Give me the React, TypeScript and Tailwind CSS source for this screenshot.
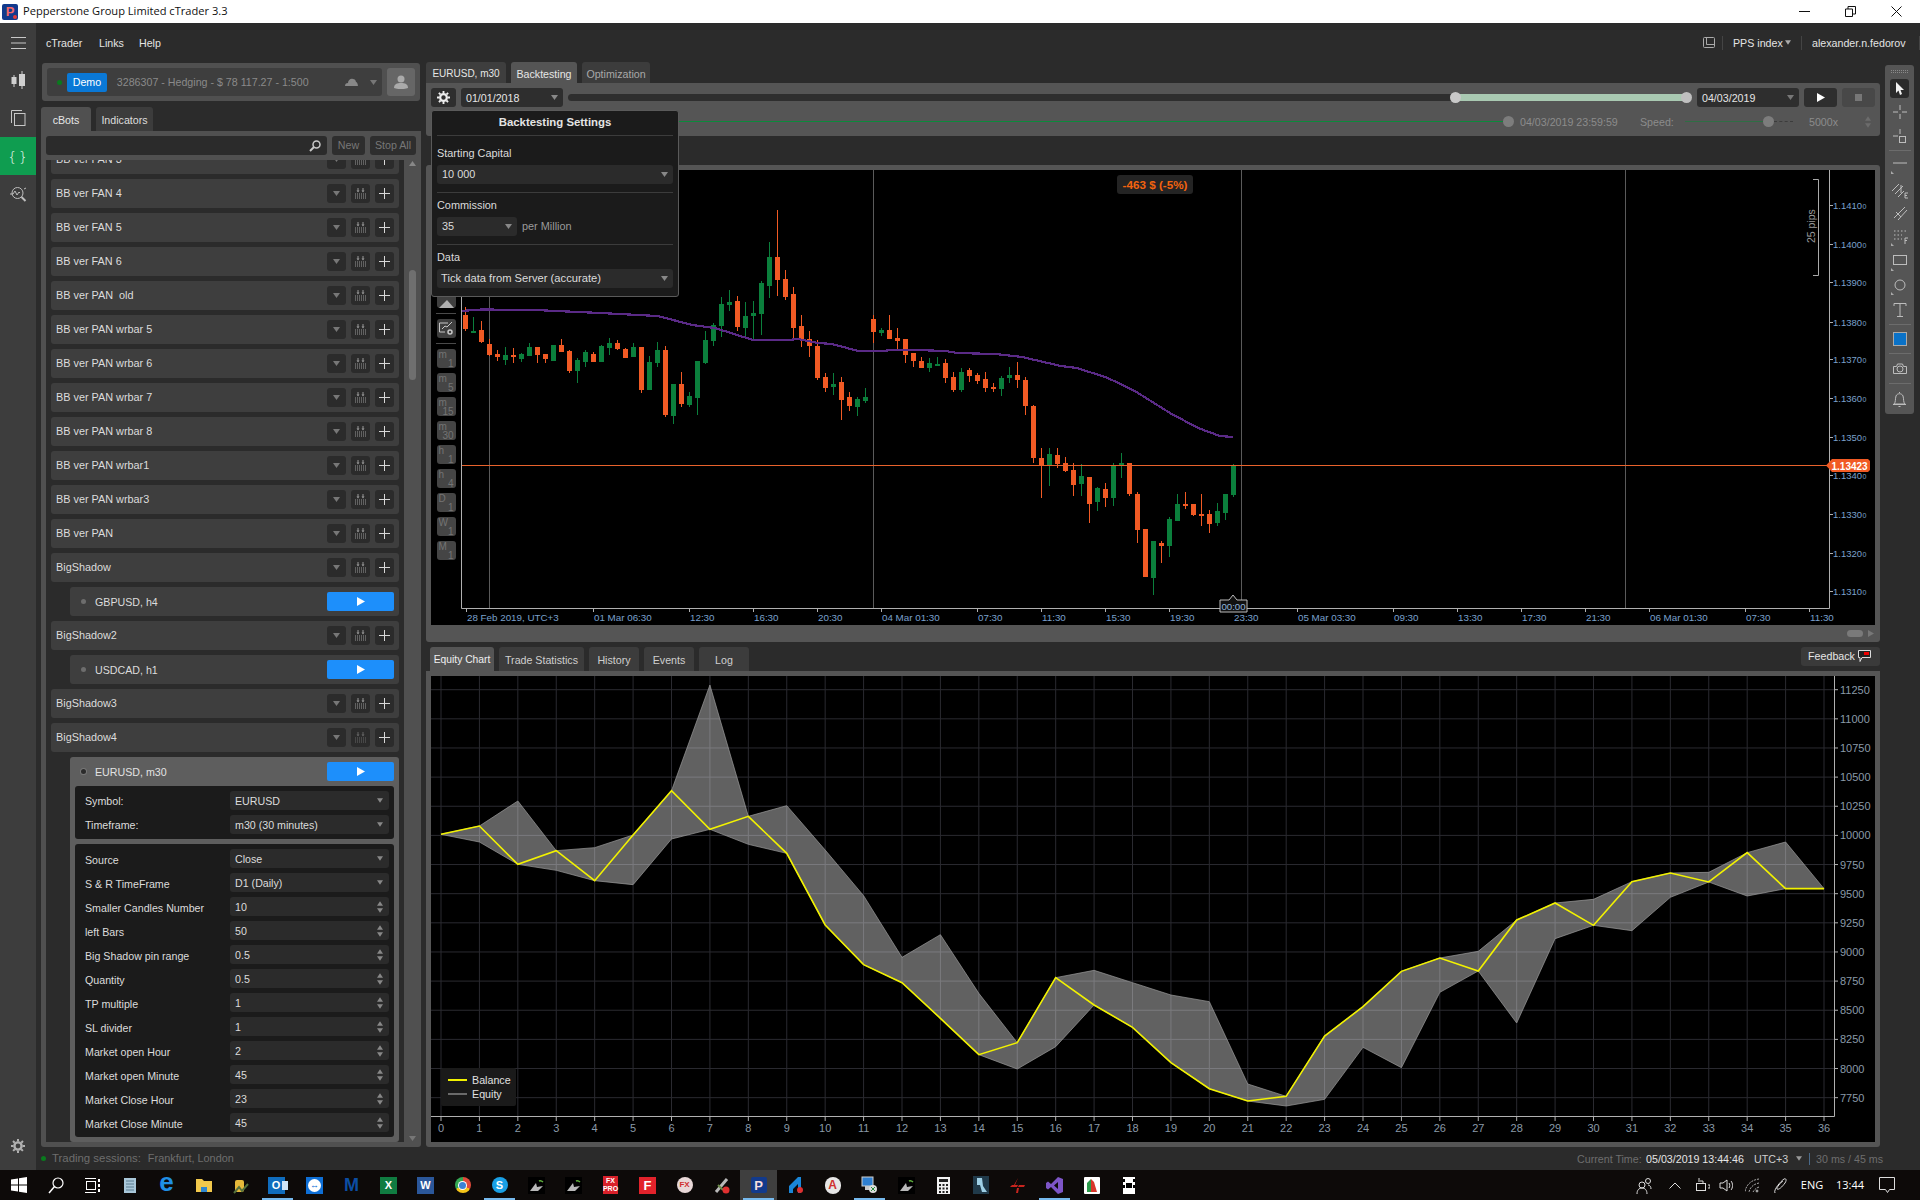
import React from "react";

const R = 1, G = 0;
const CANDLES: number[][] = [
[307,315,329,331,R],[317,331,332,333,G],[321,330,342,343,R],[339,344,355,356,R],[350,354,357,361,R],[347,355,360,365,G],[348,355,356,363,R],[353,354,359,362,G],
[343,347,356,356,G],[347,347,355,363,R],[354,354,359,363,R],[345,345,361,361,G],[339,345,352,352,R],[350,351,371,373,R],[358,360,371,383,G],[350,352,362,367,G],
[352,354,362,362,R],[345,346,362,362,G],[338,343,348,355,G],[340,343,349,350,R],[348,349,358,358,R],[343,347,357,357,G],[347,347,390,393,R],[356,362,390,390,G],
[342,350,363,367,G],[346,350,415,417,R],[384,384,416,424,G],[372,384,404,407,R],[392,396,405,407,G],[361,361,398,415,G],[331,340,363,364,G],[323,325,341,346,G],
[297,304,326,337,G],[290,302,305,311,G],[296,301,327,331,R],[302,316,328,337,G],[301,313,316,339,G],[281,283,314,335,G],[242,257,286,298,G],[210,257,280,296,R],
[270,279,297,300,R],[287,294,328,338,R],[315,326,339,347,R],[331,339,346,357,R],[340,346,378,380,R],[373,377,388,392,R],[373,384,387,395,G],[377,382,400,420,R],
[392,397,406,411,R],[397,399,407,416,G],[388,397,401,403,G],[315,319,332,343,R],[328,330,333,336,G],[315,330,339,339,R],[328,338,341,349,R],[339,339,355,363,R],
[353,353,361,367,R],[357,361,368,368,R],[358,363,368,372,G],[357,364,365,366,G],[359,363,378,383,R],[372,377,390,392,R],[368,372,390,392,G],[368,370,376,382,R],
[373,375,381,384,R],[372,379,388,392,R],[383,387,388,392,R],[376,378,389,396,G],[367,375,378,383,G],[362,375,380,388,R],[377,380,406,415,R],[405,406,458,463,R],
[448,458,465,498,R],[448,454,465,486,G],[448,455,464,468,R],[457,463,471,472,R],[463,470,485,496,R],[464,476,484,496,G],[477,477,504,523,R],[487,488,502,511,G],
[483,489,498,507,R],[463,465,498,506,G],[453,463,465,478,G],[463,463,494,496,R],[492,494,530,543,R],[529,529,577,577,R],[541,541,578,595,G],[541,543,546,563,R],
[517,519,546,557,G],[494,504,521,521,G],[492,504,505,509,R],[504,504,515,516,R],[494,514,515,526,R],[510,514,524,533,R],[503,511,523,526,G],[494,494,513,520,G],[464,465,495,497,G],
];
const MA = "461,311 482,309.5 535,310 600,313 658,316 692,325 715,328 753,340 788,340 798,339 818,343 832,344 858,351 882,351 892,350 915,350 946,351 957,353 995,354 1022,357 1061,366 1077,368 1105,377 1121,384 1138,393 1170,413 1198,428 1220,436 1233,437";
const PRICES: [string, number][] = [["1.1410",205],["1.1400",244],["1.1390",282],["1.1380",322],["1.1370",359],["1.1360",398],["1.1350",437],["1.1340",475],["1.1330",514],["1.1320",553],["1.1310",591]];
const TIMES: [string, number][] = [["28 Feb 2019, UTC+3",466],["01 Mar 06:30",593],["12:30",689],["16:30",753],["20:30",817],["04 Mar 01:30",881],["07:30",977],["11:30",1041],["15:30",1105],["19:30",1169],["23:30",1233],["05 Mar 03:30",1297],["09:30",1393],["13:30",1457],["17:30",1521],["21:30",1585],["06 Mar 01:30",1649],["07:30",1745],["11:30",1809]];

const BAL = [583,558,673,632,722,585,452,568,529,640,855,974,1028,1135,1244,1208,1013,1095,1162,1268,1346,1383,1369,1188,1100,994,954,993,840,789,856,725,699,726,638,746,746];
const UP = [583,558,483,632,623,585,452,135,529,497,630,767,952,884,1060,1208,1013,991,1028,1065,1085,1332,1369,1188,1100,994,954,934,840,789,778,725,699,697,638,606,746];
const LOW = [583,606,673,691,722,734,597,568,613,640,855,974,1028,1135,1244,1287,1220,1095,1162,1268,1346,1383,1398,1378,1222,1283,1057,993,1149,896,856,872,772,726,768,746,746];
const ex = (i: number) => 441 + 38.417 * i;
const ey = (p: number) => 640 + p / 3;
const EQV = [11250,11000,10750,10500,10250,10000,9750,9500,9250,9000,8750,8500,8250,8000,7750];
const evy = (v: number) => 689.7 + ((11250 - v) / 250) * 29.14;

function Tri({ c = "#888", w = 7, h = 5, up = false }: { c?: string; w?: number; h?: number; up?: boolean }) {
  return (
    <svg width={w} height={h} viewBox="0 0 7 5" className="shrink-0">
      <polygon points={up ? "0,5 7,5 3.5,0" : "0,0 7,0 3.5,5"} fill={c} />
    </svg>
  );
}
function Spin({ c = "#888" }: { c?: string }) {
  return (
    <div className="flex flex-col gap-[2px]">
      <Tri c={c} up w={6} h={5} />
      <Tri c={c} w={6} h={5} />
    </div>
  );
}
function PlusBtn() {
  return (
    <div className="w-[19px] h-[19px] rounded-[3px] bg-[#2b2b2b] flex items-center justify-center">
      <svg width="11" height="11"><path d="M5.5 0v11M0 5.5h11" stroke="#d8d8d8" strokeWidth="1" /></svg>
    </div>
  );
}
function GridBtn({ dim }: { dim?: boolean }) {
  const c = dim ? "#666" : "#999";
  return (
    <div className="w-[19px] h-[19px] rounded-[3px] bg-[#2b2b2b] flex items-center justify-center">
      <svg width="11" height="11" viewBox="0 0 11 11">
        <path d="M3 0v3M8 0v3" stroke={c} />
        <path d="M1.5 2.5h3L3 4.5zM6.5 2.5h3L8 4.5z" fill={c} />
        <path d="M0 6h11M0 8h11M0 10h11" stroke={c} strokeDasharray="1 1" />
      </svg>
    </div>
  );
}
function BotRow({ name, dim }: { name: string; dim?: boolean }) {
  return (
    <div className="h-[29px] w-[348px] shrink-0 bg-[#3e3e3e] rounded-[3px] flex items-center pl-[5px] pr-[5px] gap-[5px]">
      <span className="flex-1 text-[#dcdcdc] text-[10.85px] whitespace-pre">{name}</span>
      <div className="w-[19px] h-[19px] rounded-[3px] bg-[#2b2b2b] flex items-center justify-center"><Tri c="#777" /></div>
      <GridBtn dim={dim} />
      <PlusBtn />
    </div>
  );
}
function PlayBlue() {
  return (
    <div className="w-[67px] h-[19px] rounded-[2px] bg-[#1d8ffb] flex items-center justify-center">
      <svg width="8" height="9"><polygon points="0,0 8,4.5 0,9" fill="#fff" /></svg>
    </div>
  );
}
function SubRow({ name }: { name: string }) {
  return (
    <div className="h-[29px] w-[329px] ml-[19px] shrink-0 bg-[#3e3e3e] rounded-[3px] flex items-center pl-[11px] pr-[5px]">
      <div className="w-[5px] h-[5px] rounded-full bg-[#6d6d6d] mr-[9px]" />
      <span className="flex-1 text-[#dcdcdc]">{name}</span>
      <PlayBlue />
    </div>
  );
}
function Field({ label, value, kind, low }: { label: string; value: string; kind: "s" | "n"; low?: boolean }) {
  return (
    <div className="flex items-center h-[19px]">
      <span className={low ? "w-[145px] text-[#dcdcdc] whitespace-pre pt-[2px]" : "w-[145px] text-[#dcdcdc] whitespace-pre"}>{label}</span>
      <div className="w-[159px] h-[19px] bg-[#2b2b2b] rounded-[3px] flex items-center pl-[5px] pr-[6px] justify-between">
        <span className="text-[#dcdcdc]">{value}</span>
        {kind === "s" ? <Tri c="#888" w={6} h={5} /> : <Spin />}
      </div>
    </div>
  );
}

function Title() {
  return (
    <div className="h-[23px] bg-white flex items-center shrink-0 relative">
      <div className="ml-[2px] w-[16px] h-[16px] rounded-[2px] bg-[#123a8c] flex items-center justify-center relative">
        <span className="text-[#f26a6a] text-[13px] font-bold leading-none">P</span>
        <div className="absolute right-[1px] bottom-[1px] w-[4px] h-[4px] rounded-full bg-[#e23b3b]" />
      </div>
      <span className="ml-[5px] text-[#111] text-[11.1px] font-['Open_Sans',sans-serif]">Pepperstone Group Limited cTrader 3.3</span>
      <div className="ml-auto flex items-center">
        <div className="w-[46px] flex justify-center"><svg width="11" height="11"><path d="M0 5.5h11" stroke="#111" /></svg></div>
        <div className="w-[46px] flex justify-center"><svg width="11" height="11"><path d="M.5 3h7v7.5h-7zM3 3V.5h7.5V8H8" fill="none" stroke="#111" /></svg></div>
        <div className="w-[46px] mr-[1px] flex justify-center"><svg width="11" height="11"><path d="M.5.5l10 10M10.5.5l-10 10" stroke="#111" /></svg></div>
      </div>
    </div>
  );
}

function Sidebar() {
  return (
    <div className="w-[36px] shrink-0 bg-[#3d3d3d] flex flex-col items-center">
      <div className="h-[38px] w-full flex items-center justify-center pt-[2px]">
        <svg width="15" height="12"><path d="M0 .5h15M0 6h15M0 11.5h15" stroke="#c8c8c8" /></svg>
      </div>
      <div className="h-[38px] w-full flex items-center justify-center">
        <svg width="15" height="18" viewBox="0 0 15 18"><path d="M3 4v12M11 0v18" stroke="#d0d0d0" /><rect x="0.5" y="6" width="5" height="7" fill="#d0d0d0" /><rect x="8" y="3" width="6" height="12" fill="#d0d0d0" /></svg>
      </div>
      <div className="h-[38px] w-full flex items-center justify-center">
        <svg width="15" height="16" viewBox="0 0 15 16" fill="none" stroke="#c8c8c8"><path d="M.5 13V.5H11" /><rect x="3.5" y="3.5" width="10.5" height="12" /></svg>
      </div>
      <div className="h-[38px] w-full bg-[#0f9d50] flex items-center justify-center">
        <span className="text-[#e8f7ee] text-[14px] tracking-[1px] font-['Open_Sans',sans-serif] font-light">{"{ }"}</span>
      </div>
      <div className="h-[38px] w-full flex items-center justify-center">
        <svg width="17" height="16" viewBox="0 0 17 16" fill="none" stroke="#bdbdbd"><circle cx="7.5" cy="7" r="5.5" /><path d="M11.5 11l4 4" strokeWidth="2" /><path d="M0 8h3l2-3 2 4 2-3 1 1M14 3l2-1" /></svg>
      </div>
      <div className="mt-auto h-[40px] w-full flex items-start justify-center pt-[9px]">
        <svg width="14" height="14" viewBox="0 0 14 14"><circle cx="7" cy="7" r="3.6" fill="none" stroke="#b0b0b0" strokeWidth="2.4" /><path d="M7 0v14M0 7h14M2 2l10 10M12 2L2 12" stroke="#b0b0b0" strokeWidth="2" strokeDasharray="2.4 9.2 2.4" /></svg>
      </div>
    </div>
  );
}

function Account() {
  return (
    <div className="ml-[1px] w-[378px] h-[38px] bg-[#505050] rounded-[3px] mt-[1px] flex items-center pl-[5px] pr-[5px] gap-[5px] shrink-0">
      <div className="w-[335px] h-[28px] bg-[#3e3e3e] rounded-[3px] flex items-center pl-[10px] pr-[5px]">
        <div className="w-[5px] h-[5px] rounded-full bg-[#0a7a1e]" />
        <div className="ml-[5px] w-[40px] h-[19px] bg-[#0a78d6] rounded-[2px] flex items-center justify-center text-white">Demo</div>
        <span className="ml-[10px] text-[#8a8a8a] w-[229px] whitespace-nowrap">3286307 - Hedging - $ 78 117.27 - 1:500</span>
        <svg width="13" height="8" viewBox="0 0 13 8"><path d="M0 8c0-2 1-3 3-3 0-3 3-5 5-4 2 0 3 2 3 3 1 0 2 2 2 4z" fill="#888" /></svg>
        <div className="ml-[12px]"><Tri c="#777" /></div>
      </div>
      <div className="w-[28px] h-[28px] bg-[#666] rounded-[3px] flex items-center justify-center">
        <svg width="14" height="14" viewBox="0 0 14 14"><circle cx="7" cy="4" r="3.5" fill="#aaa" /><path d="M0 13c0-4 3-5 7-5s7 1 7 5c-3 1.5-11 1.5-14 0z" fill="#aaa" /></svg>
      </div>
    </div>
  );
}

function Card() {
  const r1: [string, string][] = [["Symbol:", "EURUSD"], ["Timeframe:", "m30 (30 minutes)"]];
  const r2: [string, string, "s" | "n"][] = [
    ["Source", "Close", "s"], ["S & R TimeFrame", "D1 (Daily)", "s"], ["Smaller Candles Number", "10", "n"], ["left Bars", "50", "n"],
    ["Big Shadow pin range", "0.5", "n"], ["Quantity", "0.5", "n"], ["TP multiple", "1", "n"], ["SL divider", "1", "n"],
    ["Market open Hour", "2", "n"], ["Market open Minute", "45", "n"], ["Market Close Hour", "23", "n"], ["Market Close Minute", "45", "n"],
  ];
  return (
    <div className="ml-[19px] w-[329px] bg-[#5e5e5e] rounded-[3px] px-[5px] pb-[5px] shrink-0">
      <div className="h-[29px] flex items-center pl-[6px]">
        <div className="w-[5px] h-[5px] rounded-full bg-[#2b2b2b] ring-1 ring-[#777] mr-[9px]" />
        <span className="flex-1 text-[#e2e2e2]">EURUSD, m30</span>
        <PlayBlue />
      </div>
      <div className="bg-[#1b1b1b] rounded-[3px] pl-[10px] py-[5px] flex flex-col gap-[5px] h-[53px]">
        {r1.map(([a, b]) => <Field key={a} label={a} value={b} kind="s" />)}
      </div>
      <div className="mt-[5px] bg-[#1b1b1b] rounded-[3px] pl-[10px] py-[5px] flex flex-col gap-[5px] h-[293px]">
        {r2.map(([a, b, k]) => <Field key={a} label={a} value={b} kind={k} low />)}
      </div>
    </div>
  );
}

function LeftCol() {
  const rows = ["BB ver FAN 3", "BB ver FAN 4", "BB ver FAN 5", "BB ver FAN 6", "BB ver PAN  old", "BB ver PAN wrbar 5", "BB ver PAN wrbar 6", "BB ver PAN wrbar 7", "BB ver PAN wrbar 8", "BB ver PAN wrbar1", "BB ver PAN wrbar3", "BB ver PAN", "BigShadow"];
  return (
    <div className="w-[380px] shrink-0 flex flex-col">
      <Account />
      <div className="flex gap-[5px] mt-[6px] h-[24px] shrink-0">
        <div className="w-[50px] bg-[#505050] rounded-t-[3px] flex items-center justify-center text-[#e6e6e6] pt-[2px]">cBots</div>
        <div className="w-[57px] bg-[#3c3c3c] rounded-t-[3px] flex items-center justify-center text-[#dcdcdc] pt-[2px]">Indicators</div>
      </div>
      <div className="w-[380px] h-[1016px] bg-[#505050] rounded-b-[3px] p-[5px] flex flex-col gap-[5px]">
        <div className="flex gap-[5px] h-[19px] shrink-0">
          <div className="w-[281px] bg-[#2b2b2b] rounded-[3px] flex items-center justify-end pr-[6px]">
            <svg width="12" height="12" viewBox="0 0 12 12" fill="none" stroke="#c8c8c8"><circle cx="7.5" cy="4.5" r="3.5" strokeWidth="1.5" /><path d="M5 7l-4 4" strokeWidth="2" /></svg>
          </div>
          <div className="w-[33px] bg-[#2e2e2e] rounded-[3px] flex items-center justify-center text-[#777] pb-[1px]">New</div>
          <div className="w-[46px] bg-[#2e2e2e] rounded-[3px] flex items-center justify-center text-[#777] pb-[1px]">Stop All</div>
        </div>
        <div className="flex h-[982px] shrink-0">
          <div className="w-[358px] h-[982px] bg-[#2b2b2b] overflow-hidden pl-[5px]">
            <div className="-mt-[15px] flex flex-col gap-[5px]">
              {rows.map((r) => <BotRow key={r} name={r} />)}
              <SubRow name="GBPUSD, h4" />
              <BotRow name="BigShadow2" />
              <SubRow name="USDCAD, h1" />
              <BotRow name="BigShadow3" />
              <BotRow name="BigShadow4" dim />
              <Card />
            </div>
          </div>
          <div className="w-[12px] h-[982px] flex flex-col items-end justify-between py-[1px]">
            <div className="flex flex-col items-end"><Tri c="#888" up /><div className="w-[7px] h-[110px] mt-[104px] rounded-full bg-[#6f6f6f]" /></div>
            <Tri c="#777" />
          </div>
        </div>
      </div>
    </div>
  );
}

function PriceChart() {
  return (
    <svg width="1444" height="455" viewBox="431 170 1444 455" className="block bg-black" fontFamily="'Liberation Sans',sans-serif">
      <path d="M489.5 170V608M873.5 170V608M1241.5 170V608M1625.5 170V608" stroke="#5a5a5a" />
      {CANDLES.map((c, i) => {
        const x = 465 + 8 * i;
        const col = c[4] === R ? "#f15a24" : "#0b7f3c";
        return (
          <g key={i} fill={col}>
            <rect x={x} y={c[0]} width="1" height={c[3] - c[0]} />
            <rect x={x - 2} y={c[1]} width="5" height={Math.max(c[2] - c[1], 2)} />
          </g>
        );
      })}
      <polyline points={MA} fill="none" stroke="#5a2a86" strokeWidth="2.2" shapeRendering="crispEdges" />
      <path d="M461 465.5H1829" stroke="#e8622c" />
      <path d="M461.5 170V608.5H1829.5V170" fill="none" stroke="#b0b0b0" />
      {PRICES.map(([t, y]) => (
        <g key={t}>
          <path d={`M1829 ${y + 0.5}h4`} stroke="#b0b0b0" />
          <text x="1833" y={y + 3.5} fontSize="9.5" fill="#7aa0cc">{t}<tspan fontSize="7" dx="0.5">0</tspan></text>
        </g>
      ))}
      {TIMES.map(([t, x], i) => (
        <g key={i}>
          <path d={`M${x + 0.5} 608v4`} stroke="#b0b0b0" />
          <text x={x + 1} y="621" fontSize="9.8" fill="#7aa0cc">{t}</text>
        </g>
      ))}
      <path d="M1813 179.5h5.5V275.5H1813" fill="none" stroke="#aaa" />
      <text x="0" y="0" fontSize="10.5" fill="#999" transform="translate(1815 243) rotate(-90)">25 pips</text>
      <rect x="1117" y="175" width="76" height="19" rx="3" fill="#242424" />
      <text x="1155" y="188.5" textAnchor="middle" fontSize="11.7" fill="#f2630f" fontWeight="700">-463 $ (-5%)</text>
      <path d="M1229 600l4-5 4 5h10v12h-27v-12z" fill="#111" stroke="#bbb" />
      <text x="1233.5" y="610" textAnchor="middle" fontSize="9.7" fill="#8fb3da">00:00</text>
      <path d="M1826 465.5l6-6.500h36l2 2v9l-2 2h-36z" fill="#f15a24" />
      <text x="1831.5" y="469.5" fontSize="10" fill="#fff" fontWeight="700">1.13423</text>
    </svg>
  );
}

function TfBtn({ a, b }: { a: string; b: string }) {
  return (
    <div className="w-[19px] h-[19px] rounded-[3px] bg-[#454545] flex flex-col justify-between px-[2px] text-[#747474] text-[10px] leading-[9px] py-[1px]">
      <span className="self-start">{a}</span>
      <span className="self-end">{b}</span>
    </div>
  );
}
function ChartTools() {
  const tf: [string, string][] = [["m", "1"], ["m", "5"], ["m", "15"], ["m", "30"], ["h", "1"], ["h", "4"], ["D", "1"], ["W", "1"], ["M", "1"]];
  return (
    <div className="absolute left-[10px] top-[124px] w-[20px] flex flex-col items-center gap-[5px]">
      <div className="w-[19px] h-[19px] rounded-[3px] bg-[#3f3f3f] flex items-end justify-center">
        <svg width="15" height="8"><polygon points="0,8 8,0 15,8" fill="#b0b0b0" /></svg>
      </div>
      <div className="w-[20px] h-[1px] bg-[#4a4a4a]" />
      <div className="w-[19px] h-[19px] rounded-[3px] bg-[#3f3f3f] flex items-center justify-center">
        <svg width="15" height="15" viewBox="0 0 15 15" fill="none" stroke="#c8c8c8"><path d="M9 2H.5v9H6M3 8l3-3 2 1 5-5" /><circle cx="11" cy="11" r="2" strokeWidth="1.5" /></svg>
      </div>
      <div className="w-[20px] h-[1px] bg-[#4a4a4a]" />
      {tf.map(([a, b]) => <TfBtn key={a + b} a={a} b={b} />)}
    </div>
  );
}

function Popup() {
  return (
    <div className="absolute left-[5px] top-[48px] w-[248px] h-[187px] bg-[#1b1b1b] border border-[#5a5a5a] rounded-[3px] px-[5px] flex flex-col text-[#dcdcdc] text-[10.9px] z-10">
      <div className="h-[25px] flex items-center justify-center border-b border-[#3c3c3c] font-bold text-[#e4e4e4] text-[11.4px] shrink-0">Backtesting Settings</div>
      <div className="h-[57px] border-b border-[#3c3c3c] flex flex-col justify-start pt-[11px] shrink-0">
        <span className="leading-[12px]">Starting Capital</span>
        <div className="mt-[6px] h-[19px] bg-[#2b2b2b] rounded-[3px] flex items-center justify-between px-[5px]"><span>10 000</span><Tri /></div>
      </div>
      <div className="h-[52px] border-b border-[#3c3c3c] flex flex-col pt-[6px] shrink-0">
        <span className="leading-[12px]">Commission</span>
        <div className="mt-[6px] flex items-center gap-[5px]">
          <div className="w-[80px] h-[19px] bg-[#2b2b2b] rounded-[3px] flex items-center justify-between px-[5px]"><span>35</span><Tri /></div>
          <span className="text-[#9a9a9a]">per Million</span>
        </div>
      </div>
      <div className="flex flex-col pt-[6px]">
        <span className="leading-[12px]">Data</span>
        <div className="mt-[6px] h-[19px] bg-[#2b2b2b] rounded-[3px] flex items-center justify-between pl-[4px] pr-[5px]"><span className="text-[11.2px]">Tick data from Server (accurate)</span><Tri /></div>
      </div>
    </div>
  );
}

function Toolbar() {
  return (
    <div className="h-[53px] bg-[#555] rounded-b-[3px] rounded-tr-[3px] shrink-0 p-[5px] flex flex-col gap-[5px]">
      <div className="flex gap-[5px] h-[19px] items-center">
        <div className="w-[25px] h-[19px] bg-[#2e2e2e] rounded-[3px] flex items-center justify-center">
          <svg width="13" height="13" viewBox="0 0 14 14"><circle cx="7" cy="7" r="3.6" fill="none" stroke="#eee" strokeWidth="2.4" /><path d="M7 0v14M0 7h14M2 2l10 10M12 2L2 12" stroke="#eee" strokeWidth="2" strokeDasharray="2.4 9.2 2.4" /></svg>
        </div>
        <div className="w-[102px] h-[19px] bg-[#2e2e2e] rounded-[3px] flex items-center justify-between px-[5px] text-[#e6e6e6]"><span>01/01/2018</span><Tri c="#888" /></div>
        <div className="flex-1 relative h-[7px] flex">
          <div className="w-[887px] h-[7px] bg-[#2e2e2e] rounded-l-full" />
          <div className="w-[231px] h-[7px] bg-[#a9c9b2]" />
          <div className="absolute left-[882px] -top-[2px] w-[11px] h-[11px] rounded-full bg-[#c9c9c9]" />
          <div className="absolute left-[1113px] -top-[2px] w-[11px] h-[11px] rounded-full bg-[#c0c0c0]" />
        </div>
        <div className="w-[102px] h-[19px] bg-[#2e2e2e] rounded-[3px] flex items-center justify-between px-[5px] text-[#e6e6e6]"><span>04/03/2019</span><Tri c="#777" /></div>
        <div className="w-[33px] h-[19px] bg-[#2e2e2e] rounded-[3px] flex items-center justify-center"><svg width="8" height="9"><polygon points="0,0 8,4.5 0,9" fill="#fff" /></svg></div>
        <div className="w-[33px] h-[19px] bg-[#484848] rounded-[3px] flex items-center justify-center"><div className="w-[7px] h-[7px] bg-[#777]" /></div>
      </div>
      <div className="flex items-center h-[19px]">
        <div className="ml-[37px] w-[1035px] h-[1px] bg-[#0b8a3c]" />
        <div className="w-[11px] h-[11px] rounded-full bg-[#7d7d7d]" />
        <span className="ml-[6px] w-[100px] text-[#8c8c8c] whitespace-nowrap">04/03/2019 23:59:59</span>
        <span className="ml-[20px] w-[33px] text-[#8c8c8c]">Speed:</span>
        <div className="ml-[12px] w-[78px] h-[1px] bg-[#2e6e44]" />
        <div className="w-[11px] h-[11px] rounded-full bg-[#7d7d7d]" />
        <div className="w-[19px] border-t border-dashed border-[#3c3c3c]" />
        <span className="ml-[16px] w-[30px] text-[#8c8c8c]">5000x</span>
        <div className="ml-[26px]"><Spin c="#6c6c6c" /></div>
      </div>
    </div>
  );
}

function ChartPanel() {
  return (
    <div className="mt-[29px] h-[477px] bg-[#555] rounded-[3px] shrink-0 px-[5px] pt-[5px] flex flex-col relative">
      <PriceChart />
      <ChartTools />
      <div className="h-[17px] flex items-center justify-end pr-[1px]">
        <div className="flex items-center gap-[5px]">
          <div className="w-[16px] h-[7px] rounded-full bg-[#7a7a7a]" />
          <svg width="6" height="7"><polygon points="0,0 6,3.5 0,7" fill="#777" /></svg>
        </div>
      </div>
    </div>
  );
}

function EquityChart() {
  const up = UP.map((p, i) => `${ex(i)},${ey(p)}`).join(" ");
  const low = LOW.map((p, i) => `${ex(i)},${ey(p)}`).reverse().join(" ");
  const bal = BAL.map((p, i) => `${ex(i)},${ey(p)}`).join(" ");
  return (
    <svg width="1444" height="466" viewBox="431 676 1444 466" className="block bg-black" fontFamily="'Liberation Sans',sans-serif">
      {EQV.map((v) => <path key={v} d={`M431 ${evy(v)}H1834`} stroke="#2a2a30" />)}
      {BAL.map((_, i) => <path key={i} d={`M${ex(i)} 676V1117`} stroke="#2a2a30" />)}
      <polygon points={`${up} ${low}`} fill="#ffffff" fillOpacity="0.38" stroke="#9a9a9a" strokeOpacity="0.7" />
      <polyline points={bal} fill="none" stroke="#f2f200" strokeWidth="1.6" />
      <path d="M431 1116.5H1834.5V676" fill="none" stroke="#b0b0b0" />
      {EQV.map((v) => (
        <g key={v}>
          <path d={`M1834 ${evy(v)}h4`} stroke="#b0b0b0" />
          <text x="1840" y={evy(v) + 4} fontSize="11" fill="#8a9aa8">{v}</text>
        </g>
      ))}
      {BAL.map((_, i) => (
        <g key={i}>
          <path d={`M${ex(i)} 1117v4`} stroke="#b0b0b0" />
          <text x={ex(i)} y="1132" fontSize="11" textAnchor="middle" fill="#8a9aa8">{i}</text>
        </g>
      ))}
      <rect x="441" y="1068" width="75" height="38" rx="2" fill="#1a1a1a" />
      <path d="M448 1080h19" stroke="#f2f200" strokeWidth="2" />
      <path d="M448 1094h19" stroke="#6a6a6a" strokeWidth="2" />
      <text x="472" y="1084" fontSize="10.7" fill="#e0e0e0">Balance</text>
      <text x="472" y="1098" fontSize="10.7" fill="#e0e0e0">Equity</text>
    </svg>
  );
}

function BottomPanel() {
  const tabs: [string, string][] = [["Trade Statistics", "w-[85px]"], ["History", "w-[50px]"], ["Events", "w-[50px]"], ["Log", "w-[50px]"]];
  return (
    <div className="flex flex-col shrink-0">
      <div className="mt-[5px] h-[24px] flex pl-[4px] gap-[5px] shrink-0">
        <div className="w-[64px] bg-[#555] rounded-t-[3px] flex items-center justify-center text-[#f0f0f0] text-[10.3px] pt-[2px] whitespace-nowrap">Equity Chart</div>
        {tabs.map(([t, w]) => <div key={t} className={`${w} bg-[#3c3c3c] rounded-t-[3px] flex items-center justify-center text-[#cfcfcf] pt-[2px]`}>{t}</div>)}
        <div className="ml-auto w-[79px] h-[19px] bg-[#3a3a3a] rounded-[3px] flex items-center justify-center gap-[3px] pr-[2px] pb-[1px] text-[#e6e6e6]">
          <span>Feedback</span>
          <svg width="13" height="13" viewBox="0 0 13 13"><path d="M.5 .5h12v7H4l-2 4v-4H.5z" fill="#222" stroke="#ddd" /><rect x="6" y="2" width="5" height="3" fill="#e00" /></svg>
        </div>
      </div>
      <div className="h-[476px] bg-[#555] rounded-b-[3px] p-[5px] shrink-0">
        <EquityChart />
      </div>
    </div>
  );
}

function MainCol() {
  return (
    <div className="w-[1454px] shrink-0 flex flex-col relative">
      <div className="flex gap-[5px] h-[21px] shrink-0">
        <div className="w-[80px] bg-[#3e3e3e] rounded-t-[3px] flex items-center justify-center text-[#e6e6e6] text-[10px] pt-[2px] whitespace-nowrap">EURUSD, m30</div>
        <div className="w-[66px] bg-[#555] rounded-t-[3px] flex items-center justify-center text-[#e6e6e6] pt-[2px]">Backtesting</div>
        <div className="w-[68px] bg-[#3c3c3c] rounded-t-[3px] flex items-center justify-center text-[#a8a8a8] pt-[2px]">Optimization</div>
      </div>
      <Toolbar />
      <ChartPanel />
      <BottomPanel />
      <Popup />
    </div>
  );
}

function Sep() {
  return <div className="h-[5px] w-full flex items-center justify-center shrink-0"><div className="w-[22px] h-[1px] bg-[#6c6c6c]" /></div>;
}
function CornerMark() {
  return <path d="M1 19v-3l3 3z" fill="#aaa" stroke="none" />;
}
function RightTools() {
  const s = { fill: "none", stroke: "#bdbdbd" };
  return (
    <div className="w-[29px] h-[349px] ml-[5px] mt-[3px] bg-[#555] rounded-[3px] flex flex-col items-center shrink-0">
      <div className="h-[12px] flex items-center"><svg width="18" height="3"><path d="M0 .5h18M0 2.5h18" stroke="#8a8a8a" strokeDasharray="1 1" /></svg></div>
      <div className="h-[22px] flex items-center"><div className="w-[19px] h-[19px] bg-[#2b2b2b] rounded-[3px] flex items-center justify-center"><svg width="9" height="13"><path d="M1 0v11l2.5-2.5L5 13l2-1-1.5-4H9z" fill="#f2f2f2" /></svg></div></div>
      <div className="h-[25px] flex items-center"><svg width="14" height="14" {...s}><path d="M7 0v5M7 9v5M0 7h5M9 7h5" /></svg></div>
      <div className="h-[24px] flex items-center"><svg width="14" height="14" {...s}><path d="M7 0v5M0 7h5" /><rect x="6.5" y="7.5" width="6" height="6" /></svg></div>
      <Sep />
      <div className="h-[24px] flex items-center"><svg width="20" height="20" {...s}><path d="M3 8h14" /><CornerMark /></svg></div>
      <div className="h-[25px] flex items-center"><svg width="20" height="20" {...s}><path d="M2 11l7-7M5 14l8-8M8 17l6-6M11 5v8" /><path d="M15 13h3M15 13v5h3M15 15.5h2" /></svg></div>
      <div className="h-[22px] flex items-center"><svg width="20" height="20" {...s}><path d="M4 15L15 4M8 17L17 7M6 9l5 5" /></svg></div>
      <div className="h-[26px] flex items-center"><svg width="20" height="20" {...s}><path d="M4 4h12M4 8h8M4 12h8" strokeDasharray="1.5 2" /><path d="M15 11h3M15 11v6M15 13.5h2" /><CornerMark /></svg></div>
      <div className="h-[24px] flex items-center"><svg width="20" height="20" {...s}><rect x="3.5" y="3.5" width="13" height="9" /><CornerMark /></svg></div>
      <div className="h-[23px] flex items-center"><svg width="20" height="20" {...s}><circle cx="10" cy="9" r="5" /><CornerMark /></svg></div>
      <div className="h-[25px] flex items-center"><svg width="14" height="14" {...s}><path d="M1 3V.5h12V3M7 .5v13M4 13.5h6" /></svg></div>
      <Sep />
      <div className="h-[24px] flex items-center"><div className="w-[12px] h-[12px] bg-[#0a72c8] ring-1 ring-[#aaa]" /></div>
      <div className="h-[4px] w-full flex items-center justify-center"><div className="w-[22px] h-[1px] bg-[#6c6c6c]" /></div>
      <div className="h-[26px] flex items-center"><svg width="14" height="11" {...s}><path d="M.5 3.5h3l1-2.500h5l1 2.500h3v7H.5z" /><circle cx="7" cy="6" r="3" /></svg></div>
      <div className="h-[4px] w-full flex items-center justify-center"><div className="w-[22px] h-[1px] bg-[#6c6c6c]" /></div>
      <div className="h-[28px] flex items-center"><svg width="13" height="15" {...s}><path d="M1 12c2-2 1-5 2-8 1-3 6-3 7 0 1 3 0 6 2 8zM0 12.5h13M5.5 14.5h2M6.5 0v1" /></svg></div>
    </div>
  );
}

function Status() {
  return (
    <div className="h-[23px] flex items-center shrink-0 pl-[5px] pr-[37px]">
      <div className="w-[5px] h-[5px] rounded-full bg-[#0a7a1e]" />
      <span className="ml-[6px] text-[#6e6e6e] text-[11.4px]">Trading sessions:</span>
      <span className="ml-[7px] text-[#6e6e6e] text-[10.9px]">Frankfurt, London</span>
      <span className="ml-auto w-[63px] text-[#6e6e6e] whitespace-nowrap">Current Time:</span>
      <span className="ml-[6px] w-[99px] text-[#e6e6e6] whitespace-nowrap">05/03/2019 13:44:46</span>
      <span className="ml-[9px] w-[32px] text-[#cfcfcf]">UTC+3</span>
      <div className="ml-[10px]"><Tri c="#999" w={6} h={5} /></div>
      <div className="ml-[7px] w-[1px] h-[12px] bg-[#4a6a8a]" />
      <span className="ml-[6px] text-[#6e6e6e] whitespace-nowrap">30 ms / 45 ms</span>
    </div>
  );
}

function Slot({ children, active, current }: { children: React.ReactNode; active?: boolean; current?: boolean }) {
  return (
    <div className={current ? "relative w-[37px] h-[30px] shrink-0 flex items-center justify-center bg-[#3f3f3f]" : "relative w-[37px] h-[30px] shrink-0 flex items-center justify-center"}>
      {children}
      {active ? <div className="absolute bottom-0 left-[3px] right-[3px] h-[2px] bg-[#76b9ed]" /> : null}
    </div>
  );
}
function Sq({ bg, t, c = "#fff", size = "text-[11px]" }: { bg: string; t: string; c?: string; size?: string }) {
  return <div className={`w-[17px] h-[17px] flex items-center justify-center font-bold leading-none ${size}`} style={{ background: bg, color: c }}>{t}</div>;
}
function CT() {
  return <div className="w-[17px] h-[17px] bg-black flex items-center justify-center"><svg width="15" height="13"><path d="M1 12l6-8 1 4 6-1-5 5z" fill="#b9b9b9" /><path d="M10 2c2-1 3 0 4 1" stroke="#5fae3c" fill="none" strokeWidth="1.5" /></svg></div>;
}

function Taskbar() {
  return (
    <div className="h-[30px] bg-[#0d0a09] flex items-center shrink-0 relative">
      <Slot><svg width="16" height="16" viewBox="0 0 16 16" fill="#fff"><path d="M0 2.5l7-1v6H0zM8 1.300l8-1.300v7.500H8zM0 8.500h7v6l-7-1zM8 8.500h8V16l-8-1.300z" /></svg></Slot>
      <Slot><svg width="16" height="17" viewBox="0 0 16 17" fill="none" stroke="#fff"><circle cx="10" cy="6" r="5" strokeWidth="1.2" /><path d="M6.5 9.5L1 16" strokeWidth="1.5" /></svg></Slot>
      <Slot><svg width="16" height="15" viewBox="0 0 16 15" fill="none" stroke="#fff"><path d="M0 .5h11M0 14.5h11" /><rect x="1.5" y="3.5" width="9" height="8" /><path d="M14 1v3M14 6v3M14 11v3" strokeWidth="2" /></svg></Slot>
      <Slot><svg width="14" height="17" viewBox="0 0 14 17"><rect x="1" y="1" width="12" height="15" fill="#a9c7d9" /><path d="M3 4h8M3 7h8M3 10h8M3 13h8" stroke="#5b7c90" /></svg></Slot>
      <Slot><span className="text-[#1f8fe6] text-[26px] font-bold leading-none -mt-[6px]">e</span></Slot>
      <Slot><svg width="16" height="15" viewBox="0 0 16 15"><path d="M0 1h6l2 2h8v11H0z" fill="#f2c94c" /><rect x="5" y="9" width="6" height="5" fill="#2f87d0" /></svg></Slot>
      <Slot><svg width="16" height="17" viewBox="0 0 16 17"><rect x="2" y="3" width="9" height="12" rx="2" fill="#e6b93a" /><path d="M1 16l5-6 3 4 6-7" stroke="#55713c" strokeWidth="2" fill="none" /></svg></Slot>
      <Slot active><div className="flex items-center"><Sq bg="#0f6cbd" t="O" /><div className="w-[6px] h-[9px] bg-[#cfe4f7] -ml-[3px]" /></div></Slot>
      <Slot><div className="w-[17px] h-[17px] bg-[#0e6fd6] flex items-center justify-center"><div className="w-[13px] h-[13px] rounded-full bg-white flex items-center justify-center text-[#0e6fd6] text-[9px] font-bold leading-none">↔</div></div></Slot>
      <Slot><span className="text-[#0b4ea2] text-[18px] font-bold leading-none">M</span></Slot>
      <Slot><Sq bg="#107c41" t="X" /></Slot>
      <Slot><Sq bg="#2b579a" t="W" /></Slot>
      <Slot><div className="w-[16px] h-[16px] rounded-full bg-[conic-gradient(#e04a3a_0deg_120deg,#f5c518_120deg_240deg,#34a853_240deg_360deg)] flex items-center justify-center"><div className="w-[7px] h-[7px] rounded-full bg-[#3b82d6] ring-1 ring-white" /></div></Slot>
      <Slot active><div className="w-[16px] h-[16px] rounded-full bg-[#19a0e6] flex items-center justify-center text-white text-[11px] font-bold leading-none">S</div></Slot>
      <Slot><CT /></Slot>
      <Slot><CT /></Slot>
      <Slot><div className="w-[15px] h-[18px] bg-[#d8202a] flex flex-col items-center justify-center text-white text-[7px] font-bold leading-[8px]"><span>FX</span><span>PRO</span></div></Slot>
      <Slot><Sq bg="#e2222b" t="F" size="text-[13px]" /></Slot>
      <Slot><div className="w-[16px] h-[16px] rounded-full bg-[#e8d8d8] flex items-center justify-center text-[#d03030] text-[8px] font-bold leading-none">FX</div></Slot>
      <Slot><svg width="16" height="17" viewBox="0 0 16 17"><path d="M2 15L13 2" stroke="#b9b9b9" strokeWidth="3" /><path d="M4 8l5 5" stroke="#6a8a4a" strokeWidth="2" /><circle cx="12" cy="13" r="3.5" fill="#e03030" /></svg></Slot>
      <Slot active current><div className="w-[16px] h-[16px] rounded-[2px] bg-[#123a8c] flex items-center justify-center text-[#f5dede] text-[13px] font-bold leading-none">P</div></Slot>
      <Slot><svg width="16" height="18" viewBox="0 0 16 18"><path d="M1 10L10 1h3v16h-3V8l-5 5v4H1z" fill="#1a86d8" /><circle cx="12" cy="14" r="3" fill="#e03030" /></svg></Slot>
      <Slot><div className="w-[16px] h-[17px] rounded-full bg-[#e6e6e6] flex items-center justify-center text-[#d03030] text-[12px] font-bold leading-none">A</div></Slot>
      <Slot active><svg width="17" height="18" viewBox="0 0 17 18"><rect x="1" y="1" width="11" height="9" fill="#2f7fd0" stroke="#d0d0d0" /><rect x="4" y="10" width="5" height="4" fill="#c8c8c8" /><circle cx="12" cy="13" r="4" fill="#ddd" /><path d="M10 11l4 4M14 11l-4 4" stroke="#2a8a3c" /></svg></Slot>
      <Slot><CT /></Slot>
      <Slot><svg width="13" height="17" viewBox="0 0 13 17"><rect width="13" height="17" fill="#f2f2f2" /><rect x="2" y="2" width="9" height="3" fill="#222" /><path d="M2 7h2v2H2zM5.5 7h2v2h-2zM9 7h2v2H9zM2 10.500h2v2H2zM5.500 10.500h2v2h-2zM9 10.500h2v2H9zM2 14h2v2H2zM5.500 14h2v2h-2zM9 14h2v2H9z" fill="#222" /></svg></Slot>
      <Slot><svg width="16" height="18" viewBox="0 0 16 18"><rect x="0" y="0" width="16" height="18" fill="#203a4a" /><path d="M4 2h5l1 8 4 6H9L7 9H4z" fill="#9fd0e6" /></svg></Slot>
      <Slot><svg width="15" height="15" viewBox="0 0 15 15"><path d="M8 0L5 7h3l-1 2H0l2-2h2zM8 9h6l1-2H9zM7 10l-1 5h2l1-5z" fill="#c8241e" /></svg></Slot>
      <Slot active><svg width="17" height="17" viewBox="0 0 17 17"><path d="M12 0l5 2v13l-5 2-7-7-3 2.5L0 11V6l2-1.500L5 7zM12 5L8 8.500l4 3.500z" fill="#7d55c7" fillRule="evenodd" /></svg></Slot>
      <Slot><div className="w-[16px] h-[17px] bg-white flex items-center justify-center rounded-[1px]"><svg width="12" height="13" viewBox="0 0 12 13"><path d="M1 13V4l4-4v13z" fill="#2a9a4a" /><path d="M5 13V0l3 3 3 10z" fill="#d8362a" /></svg></div></Slot>
      <Slot><svg width="12" height="17" viewBox="0 0 12 17"><rect width="12" height="17" fill="#fff" /><rect x="0" y="2" width="2" height="3" fill="#000" /><rect x="10" y="2" width="2" height="3" fill="#000" /><rect x="0" y="8" width="2" height="3" fill="#000" /><rect x="10" y="8" width="2" height="3" fill="#000" /><rect x="3" y="6" width="6" height="5" fill="#000" /></svg></Slot>
      <div className="ml-auto flex items-center text-white text-[11px] font-['Open_Sans',sans-serif]">
        <div className="w-[31px] flex justify-center"><svg width="16" height="17" viewBox="0 0 16 17" fill="none" stroke="#ddd"><circle cx="6" cy="8" r="3" /><path d="M1 17c0-4 2-6 5-6s5 2 5 6" /><circle cx="12" cy="4" r="2.5" /><path d="M12 8c2 0 3 2 3 4" /></svg></div>
        <div className="w-[31px] flex justify-center"><svg width="12" height="7"><path d="M.5 6.5l5.500-5.500 5.500 5.500" fill="none" stroke="#ddd" /></svg></div>
        <div className="w-[24px] flex justify-center"><svg width="15" height="14" viewBox="0 0 15 14" fill="none" stroke="#ddd"><rect x="1.5" y="5.5" width="9" height="7" /><path d="M3 3h5v2M3 1h2M13 7h2v3h-2" /></svg></div>
        <div className="w-[25px] flex justify-center"><svg width="15" height="15" viewBox="0 0 15 15" fill="none" stroke="#ddd"><path d="M1 5h3l4-3v11L4 10H1zM10 5c1 1 1 4 0 5M12 3c2 2 2 7 0 9" /></svg></div>
        <div className="w-[26px] flex justify-center"><svg width="15" height="15" viewBox="0 0 15 15" fill="none" stroke="#aaa"><path d="M14 1C6 2 1 7 0 14M14 5C9 6 5 9 4 14M14 9c-3 1-5 3-6 5" strokeDasharray="2 1" /><circle cx="12" cy="13" r="1" fill="#aaa" /></svg></div>
        <div className="w-[28px] flex justify-center"><svg width="15" height="17" viewBox="0 0 15 17" fill="none" stroke="#ddd"><path d="M3 16c-2-3 6-12 9-14 2-1 3 1 1 4-3 4-6 7-8 6-1-1 4-7 6-8" /></svg></div>
        <div className="w-[38px] text-center">ENG</div>
        <div className="w-[38px] text-center">13:44</div>
        <div className="w-[35px] flex justify-center mr-[16px]"><svg width="16" height="17" viewBox="0 0 16 17" fill="none" stroke="#ddd"><path d="M.5 .5h15v12h-5l-2 3-2-3h-6z" /></svg></div>
      </div>
    </div>
  );
}

export default function App() {
  return (
    <div className="w-[1920px] h-[1200px] flex flex-col overflow-hidden bg-[#2b2b2b] font-['Liberation_Sans',Arial,sans-serif] text-[10.67px]">
      <Title />
      <div className="flex h-[1147px] shrink-0">
        <Sidebar />
        <div className="w-[1884px] flex flex-col">
          <div className="h-[39px] flex items-center shrink-0 pl-[10px] text-[#e4e4e4] relative">
            <span className="w-[53px]">cTrader</span>
            <span className="w-[40px]">Links</span>
            <span>Help</span>
            <div className="ml-auto flex items-center">
              <svg width="12" height="11" viewBox="0 0 12 11" fill="none" stroke="#aaa"><rect x=".5" y=".5" width="11" height="10" rx="1" /><path d="M3.5 1v6.5H11" /></svg>
              <div className="ml-[7px] w-[1px] h-[14px] bg-[#444]" />
              <span className="ml-[10px] w-[48px] whitespace-nowrap">PPS index</span>
              <div className="ml-[4px]"><Tri c="#aaa" w={6} h={5} /></div>
              <div className="ml-[10px] w-[1px] h-[14px] bg-[#444]" />
              <span className="ml-[10px] w-[97px] whitespace-nowrap">alexander.n.fedorov</span>
              <div className="ml-[10px] w-[1px] h-[14px] bg-[#444]" />
            </div>
          </div>
          <div className="flex h-[1085px] shrink-0 pl-[5px]">
            <LeftCol />
            <div className="w-[5px] shrink-0" />
            <MainCol />
            <RightTools />
          </div>
          <Status />
        </div>
      </div>
      <Taskbar />
    </div>
  );
}
